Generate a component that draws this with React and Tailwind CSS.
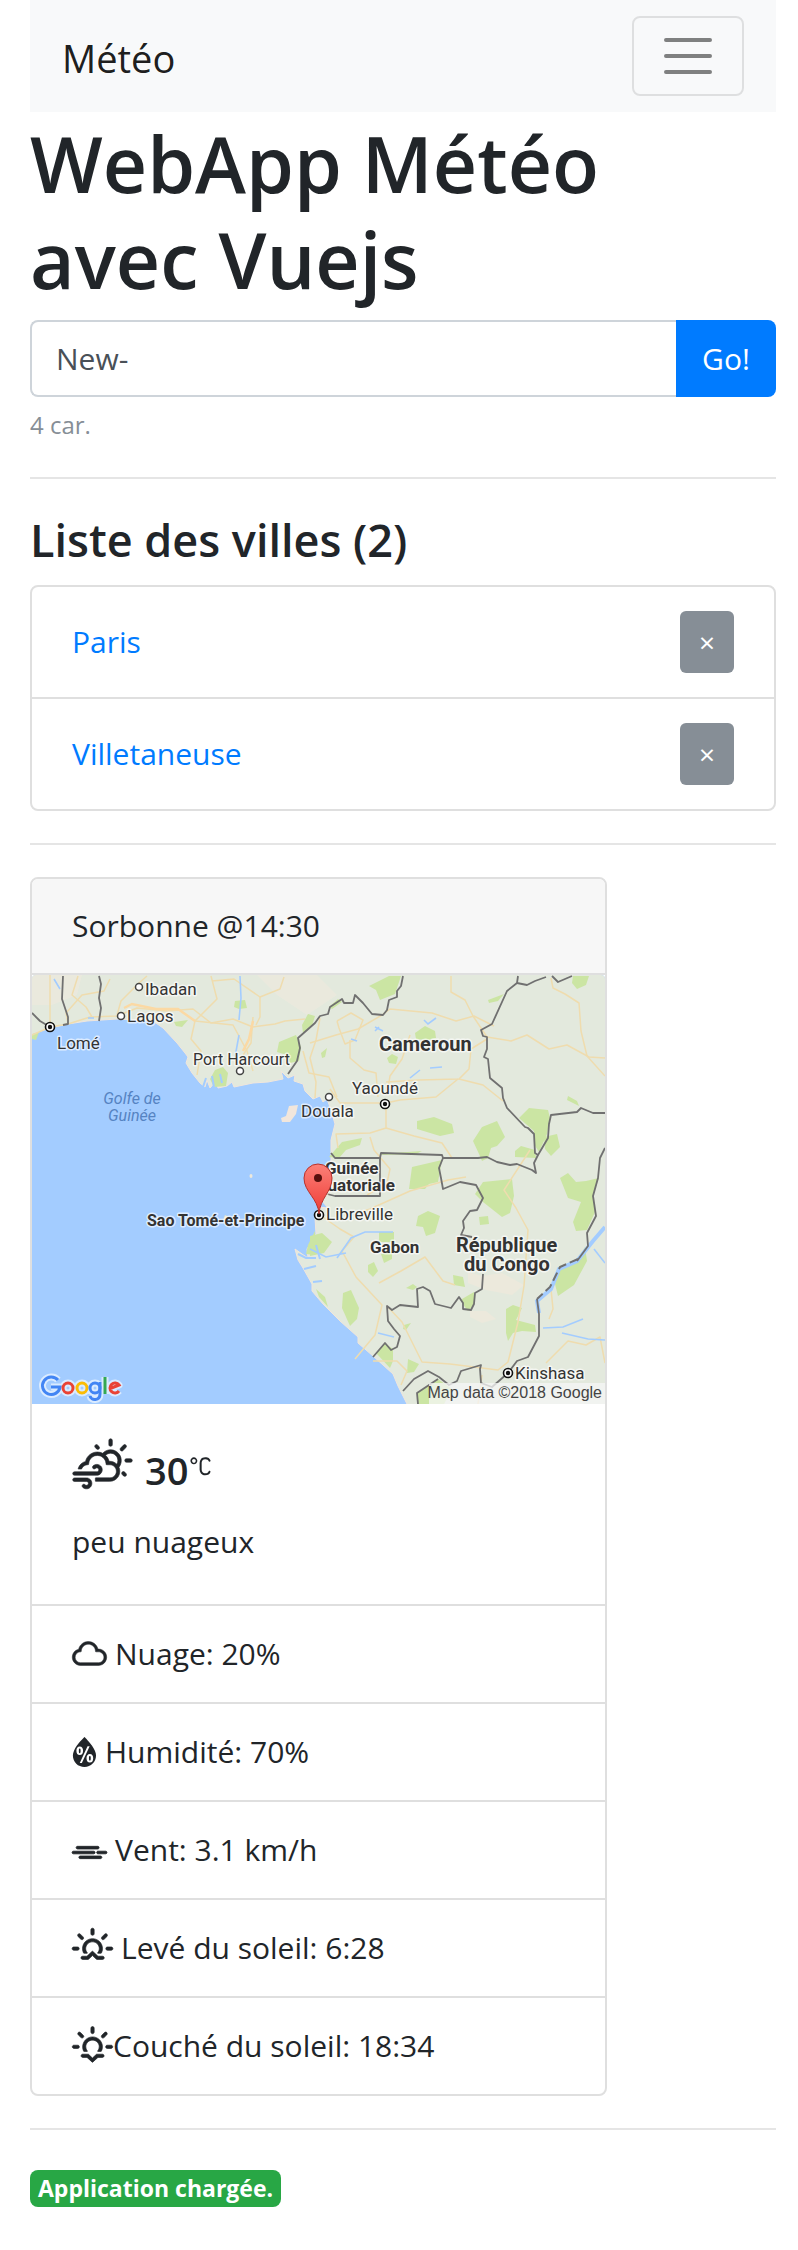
import React, { useState } from "react";
import {
  WiDayCloudyGusts,
  WiCloud,
  WiHumidity,
  WiWindy,
  WiSunrise,
  WiSunset,
  WiCelsius,
} from "react-icons/wi";

const GREENS = [
  "M203 26l10-1 2 8-8 1-5-2z",
  "M142 47l14-2-6 7-6-1z",
  "M0 59l7-2-3 8-4-1z",
  "M183 95l8-3 5 6-2 13-12 1-4-8z",
  "M247 67l17-7 5 12-2 14-9 2-3-8-10-3z",
  "M270 50l6-11 7 2-3 10-9 7z",
  "M337 11l20-10 12 0-6 18-15 6-4-10z",
  "M297 32l9-8 4 3-10 7z",
  "M456 25l16-6-6 7-9 2z",
  "M541 1h16l-3 9-9 4-5-6z",
  "M383 58l10-7 10 5 1 7-8 2-12-1z",
  "M355 83l5-4 6 3-2 7-7-1z",
  "M289 78l6-5-2 9-3 1z",
  "M385 146l17-4 18 7 2 9-14 3-23-7z",
  "M310 167l20-4-2 7-14 5-7 8-10-1z",
  "M347 179l43-3-6 3-33 1z",
  "M441 166l9-14 15-6 4 8 4 8-8 9-6 2-3 10-6 3-3-7z",
  "M487 143l10-10 19 2 2 8-3 16-8 18-5-8v-13z",
  "M536 121l9 5 2 5-12-6z",
  "M512 162l13-3 3 13-9 9-6-7z",
  "M483 176l6-5 14 4 1 8-21-1z",
  "M380 192l30-7-4 22-9 2-4 5-16 0z",
  "M451 207l29-3 2 17-4 17-8 4-19-15-8-8z",
  "M528 203l8-5 8 9 10-1 13-3-6 16 2 18-8 18-11 1-3-9 8-20-13-4z",
  "M386 241l10-5 12 5-5 17-9 3-3-9-7-1z",
  "M347 257h15v10h-15z",
  "M349 279l11-2v7l-8 4z",
  "M278 261l12-3 10 9-8 11-14 3z",
  "M276 270l7-14v24l-9-1z",
  "M336 290l6-3 4 9-5 6-5-5z",
  "M421 300l10 2 2 10-11-2z",
  "M374 313l7-4 4 3-4 3z",
  "M447 242l9-1 1 8-9 1z",
  "M523 309l4-18 19-6 7-13 2 14-13 24-16 11z",
  "M430 324l12-7 1 11-7 8-6-8z",
  "M474 334l7-4 9 3-6 12 19 5 1 7-14-1-9 2-5 8-2-8z",
  "M311 318l8-3 8 18-2 11-7 7-8-18z",
  "M372 350l7-2-5 7-3-1z",
  "M344 378l9-10 8 6v12l-3 7z",
  "M376 384l11 5-5 8-7 1z",
  "M385 418l21-14 14 10-8 15h-27z",
  "M284 314l9 8 3 10-9-10z",
];

const ROADS = [
  "M18 52V0",
  "M0 60l18-8 18-3 22-7 27-1 20-8 30 3 26-2 18 14 22-4 20 8 22-3 10-3 20-2",
  "M36 48l-2-10 16-18 22-4 6-12",
  "M60 42l-6-10-14-12 6-19",
  "M85 40l4-14 18-18 8-7",
  "M163 46l-4 18 10 12-4 24",
  "M163 46l22-22-6-23",
  "M163 46l38 4 14 26 6 20",
  "M180 6l22-2 26 18 20-8 4-12",
  "M228 22v20l-4 8",
  "M221 42l-2 26-8 12",
  "M271 76l6 22 20 4 8 20",
  "M288 43l-4 22-6 18 6 24-1 16",
  "M278 68l26-8 22-6 24-14 8-6 42 4 24 8 18-5 20 10",
  "M305 46l14-8 12 7-8 20-10 4-6-16-2-7",
  "M318 65v18l14 12 12 3 2 24",
  "M419 1v16l14 8 8 16 14 21",
  "M455 62l24 4 16-6 22 14 18-4 22 12 16 1",
  "M519 3l2 10 12 6 14 9 2 28 6 25 18 20",
  "M455 64l-16 10-2 20-10 10-40 1-33 2",
  "M355 120l3-19 12-17 8-24",
  "M427 104l24 6 20 16",
  "M298 114l10 14 46 0 14-3 36-3 22-18",
  "M354 128v25l-16 5-34 1 2 14",
  "M354 153l28 8 28 7 10 15",
  "M338 162l4 13 16 19-3 14-20 12",
  "M326 238l12-4 40-18 38-11 18-3",
  "M288 240l20 14 14 8-12 14 14 26 26 28-7 30-20 24",
  "M355 331l15 16 20 40 28 2 48 6 10-8 10-40 6-36 4-56-12-22-12-18 26-40",
  "M347 308l22-12 24-14 18 24 12 4",
  "M341 386l24 0 10 10-6 14",
  "M514 388l22-22 18 4 14-8 5 26",
  "M507 324l12-10 2 20-4 10",
  "M450 400l-4 29",
];

const WATERS = [
  "M208 1l1 22-2 22M207 60l-4 22",
  "M22 4l6 10M56 43h6",
  "M343 52l8 4M343 56l4-4",
  "M392 45l4 4 8-6",
  "M319 64l6 2",
  "M378 103l10-8M398 93l12-1",
  "M305 283l14-20 14-6 28 0",
  "M278 274l16 8 20-4",
  "M511 353l20-1 20-8",
  "M530 358l26 6 17 1",
  "M346 358l16 4",
  "M562 274l11 14",
];

const BORDERS = [
  "M31 1l-1 23 6 18v7l-5 1",
  "M67 1l2 8-2 14 2 10-2 13",
  "M0 38l8 8 10 6",
  "M256 99l9-13 3-13-2-10 17-15 5-7 8-2 2-7 12-8 2 4h9l2-8 8 8 9 11 11 1 4-5 2-10 8-3v-6l4-5 2-10",
  "M486 1l-1 7-10 8-15 33-11 6 2 6 4 1v12l-3 8 4 2 2 19 12 10 1 10 4 10 18 19 3 1 6 6 1 19 3 2 10-17 1-14 2-9 26-3 4-4 12 5h12",
  "M485 8l10 2 8-4 11-4M520 1l6 6 14-6",
  "M506 180l-4 8 2 10-4-3-15-6-7 1-13-3-10-5-9 1h-35l-1-3-61-2-1 5h-45l-4-5",
  "M348 183v38h-45l-8-2",
  "M411 183l-4 10 2 10 2 11 17-7 16 3 7 13-6 12-7 1-7 10 1 7-3 7 11 2",
  "M451 299l-1 15-7 4-1 11-3 6-8-1v-6l-4-6-8 11-16-4-5-13-7-4-6 2 1 18-18-2-8 5-5-4 1 15 6 8 6 7-3 11-6 3-6-7-12 14",
  "M573 173l-5 10-2 20-5 18 3 20-9 17 1 13-11 15",
  "M505 324l2 15v22l-11 21-11 4-9 12-16 14-11-4-1-14 1-4-20 6-4 10-8 4-10-8-11-6-14 8-11 12",
  "M386 429l-1-11 21-14",
];

const PLACES = [
  { text: "Ibadan", x: 113, y: 20, size: 17 },
  { text: "Lagos", x: 95, y: 47, size: 17 },
  { text: "Lomé", x: 25, y: 74, size: 17 },
  { text: "Port Harcourt", x: 161, y: 90, size: 16 },
  { text: "Douala", x: 269, y: 142, size: 17 },
  { text: "Yaoundé", x: 320, y: 119, size: 17 },
  { text: "Libreville", x: 294, y: 245, size: 17 },
  { text: "Kinshasa", x: 483, y: 404, size: 17 },
  { text: "Cameroun", x: 347, y: 76, size: 20, bold: true },
  { text: "Guinée", x: 293, y: 199, size: 17, bold: true },
  { text: "quatoriale", x: 286, y: 216, size: 17, bold: true },
  { text: "Sao Tomé-et-Principe", x: 115, y: 251, size: 16, bold: true },
  { text: "Gabon", x: 338, y: 278, size: 17, bold: true },
  { text: "République", x: 424, y: 277, size: 20, bold: true },
  { text: "du Congo", x: 432, y: 296, size: 20, bold: true },
];

const TOWNS = [[107, 12], [89, 41], [208, 96], [297, 122]];
const CAPITALS = [[18, 52], [353, 129], [287, 240], [476, 398]];

function CityMap() {
  return (
    <svg viewBox="0 0 573 429" className="block w-full rounded-t-sm" role="img" aria-label="Carte">
      <defs>
        <linearGradient id="pin" x1="0" y1="0" x2="0" y2="1">
          <stop offset="0" stopColor="#fb8078" />
          <stop offset="1" stopColor="#ee3b35" />
        </linearGradient>
      </defs>
      <rect width="573" height="429" fill="#a3ccff" />
      <path
        fill="#e3e9dd"
        stroke="#f1e6dc"
        strokeWidth="1"
        d="M-2 -2V60L18 53 36 49 55 46 85 44 121 46 131 53 145 68 153 78 156 82 154 88 160 98 168 108 173 112 175 105 178 113 184 106 186 113 195 111 200 107 202 112 221 108 236 107 251 104 249 96 256 103 263 100 262 106 271 109 273 116 281 124 288 121 291 127 295 124 299 135 303 149 299 165 299 186 295 205 290 226 296 233 287 232 283 243 284 259 275 274 276 283 270 279 263 274 266 285 271 293 280 309 280 316 291 329 308 346 326 362 326 368 341 381 361 399 366 411 376 431H576V-2Z"
      />
      <path fill="#f1e6dc" d="M257 131l9-1-2 9-6 8-8 0-1-4 5-2z" />
      <path fill="#eeeadd" d="M0 0h50l-5 20-25 10H0zM225 0h60l20 20-30 20-30-20z" opacity=".6" />
      <path fill="#ece9dc" d="M436 297l14 4 20-3 22 12-12 10-26-5-18-7zM438 336l16 0 10 8-14 4-12-6z" />
      <ellipse cx="219" cy="201" rx="1.5" ry="2" fill="#eee9dc" />
      <path d="M193 240l4 2-2 5-4-2z" fill="#eee9c8" />
      <g fill="#cbe5a3">
        {GREENS.map((d) => <path key={d} d={d} />)}
      </g>
      <g fill="none" stroke="#efdcae" strokeWidth="1.5" strokeLinejoin="round">
        {ROADS.map((d) => <path key={d} d={d} />)}
      </g>
      <path d="M92 33l8-4 24 5 22 0 17 12M221 46l-4 18-6 12" fill="none" stroke="#fbd9a4" strokeWidth="2.5" />
      <g fill="none" stroke="#a3ccff" strokeWidth="1.6">
        {WATERS.map((d) => <path key={d} d={d} />)}
      </g>
      <path d="M174 103l-3 9M180 101l2 11M190 108l-2-9M284 270l4 14M266 279l8 4 10 0M272 294l12-3M281 307l9-1" fill="none" stroke="#a3ccff" strokeWidth="2" />
      <path d="M573 252l-12 14-16 20-18 8-8 20-14 12 2 12" fill="none" stroke="#a3ccff" strokeWidth="4" />
      <path d="M546 284l-18 8-10 20-13 12" fill="none" stroke="#707070" strokeWidth="2" strokeDasharray="9 4" />
      <g fill="none" stroke="#707070" strokeWidth="1.8" strokeLinejoin="round">
        {BORDERS.map((d) => <path key={d} d={d} />)}
      </g>
      <rect x="397" y="408" width="176" height="21" fill="#f5f5f5" fillOpacity=".75" />
      {TOWNS.map(([x, y]) => (
        <circle key={x} cx={x} cy={y} r="3.5" fill="#fff" stroke="#444" strokeWidth="1.5" />
      ))}
      {CAPITALS.map(([x, y]) => (
        <g key={x}>
          <circle cx={x} cy={y} r="4.5" fill="#fff" stroke="#111" strokeWidth="1.6" />
          <circle cx={x} cy={y} r="2.2" fill="#111" />
        </g>
      ))}
      <g className="font-['Roboto',sans-serif]" fill="#333" stroke="#fff" strokeOpacity=".65" strokeWidth="3" strokeLinejoin="round" paintOrder="stroke">
        {PLACES.map((p) => (
          <text key={p.text} x={p.x} y={p.y} fontSize={p.size} fontWeight={p.bold ? 700 : 400}>{p.text}</text>
        ))}
      </g>
      <g className="font-['Roboto',sans-serif] italic" fontSize="16" fill="#5583c2" textAnchor="middle">
        <text x="100" y="129">Golfe de</text>
        <text x="100" y="146">Guinée</text>
      </g>
      <text x="570" y="423" fontSize="16" textAnchor="end" fill="#444" className="font-['Liberation_Sans',sans-serif]">Map data ©2018 Google</text>
      <path
        d="M287 239c-1-16-15-22-15-36a14 14 0 0 1 28 0c0 14-12 20-13 36z"
        fill="url(#pin)"
        stroke="#b8322c"
        strokeWidth="1"
      />
      <circle cx="286" cy="203" r="4" fill="#56100d" />
      <GoogleMark />
    </svg>
  );
}

function GoogleMark() {
  return (
    <g fill="none" strokeWidth="3">
      <path
        d="M26 405a8.800 8.800 0 1 0 2 7h-9M31 413a5 5 0 1 0 10 0a5 5 0 1 0-10 0M45 413a5 5 0 1 0 10 0a5 5 0 1 0-10 0M58 413a5 5 0 1 0 10 0a5 5 0 1 0-10 0M68 407v12c0 7-9 7-10 2M73 402v17M77 414l10-4a5 5 0 1 0 0 6"
        stroke="#fff"
        strokeOpacity=".6"
        strokeWidth="7"
        strokeLinejoin="round"
      />
      <path d="M26 405a8.800 8.800 0 1 0 2 7h-9" stroke="#4285f4" />
      <circle cx="36" cy="413" r="5" stroke="#ea4335" />
      <circle cx="50" cy="413" r="5" stroke="#fbbc05" />
      <circle cx="63" cy="413" r="5" stroke="#4285f4" />
      <path d="M68 407v12c0 7-9 7-10 2" stroke="#4285f4" />
      <path d="M73 402v17" stroke="#34a853" />
      <path d="M77 414l10-4a5 5 0 1 0 0 6" stroke="#ea4335" />
    </g>
  );
}

function CityRow({ name }) {
  return (
    <li className="flex items-center justify-between border-b-2 border-[#dfdfdf] px-10 py-6 last:border-b-0">
      <a href="#ville" className="text-[#007bff]">{name}</a>
      <button type="button" aria-label={`Supprimer ${name}`} className="h-[62px] w-[54px] rounded-md bg-[#868e96] text-[28px] leading-none text-white">
        ×
      </button>
    </li>
  );
}

function Detail({ icon, children }) {
  return (
    <li className="flex h-[98px] items-center border-t-2 border-[#dfdfdf] px-10">
      {icon}
      <span>{children}</span>
    </li>
  );
}

const Rule = () => <hr className="my-8 border-t-2 border-[#e5e5e5]" />;

export default function App() {
  const [city, setCity] = useState("New-");
  return (
    <div className="min-h-screen bg-white pr-[22px] pb-8 pl-[30px] font-['Open_Sans','Noto_Sans',sans-serif] text-[30px] leading-[48px] text-[#212529]">
      <nav className="flex h-28 items-center justify-between bg-[#f8f9fa] px-8">
        <a href="#accueil" className="pt-1 text-[38px] text-black/90">Météo</a>
        <button type="button" aria-label="Menu" className="flex h-20 w-28 items-center justify-center rounded-lg border-2 border-black/10">
          <svg viewBox="0 0 60 60" className="size-[60px]" stroke="#7f8080" strokeWidth="4" strokeLinecap="round">
            <path d="M8 14h44M8 30h44M8 46h44" />
          </svg>
        </button>
      </nav>

      <h1 className="mb-3 pt-1 text-[77px] leading-[96px] font-semibold">WebApp Météo<br />avec Vuejs</h1>

      <form onSubmit={(e) => e.preventDefault()}>
        <div className="flex h-[77px]">
          <input
            id="ville"
            aria-label="Ville"
            value={city}
            onChange={(e) => setCity(e.target.value)}
            className="min-w-0 flex-1 rounded-l-lg border-2 border-r-0 border-[#ced4da] px-6 text-[#495057] outline-none"
          />
          <button type="submit" className="w-[100px] rounded-r-lg bg-[#007bff] text-white">Go!</button>
        </div>
        <label htmlFor="ville" className="mt-2 block text-2xl leading-[40px] text-[#868e96]">{city.length} car.</label>
      </form>

      <Rule />

      <h2 className="mb-4 text-[45px] leading-[58px] font-semibold">Liste des villes (2)</h2>
      <ul className="rounded-lg border-2 border-[#dfdfdf]">
        <CityRow name="Paris" />
        <CityRow name="Villetaneuse" />
      </ul>

      <Rule />

      <section className="w-[577px] max-w-full overflow-hidden rounded-lg border-2 border-[#dfdfdf]">
        <header className="border-b-2 border-[#dfdfdf] bg-[#f7f7f7] px-10 py-6 leading-[46px]">Sorbonne @14:30</header>
        <CityMap />
        <div className="px-10 pt-10 pb-9">
          <h3 className="mb-5 flex items-center text-[38px] leading-[50px] font-semibold">
            <WiDayCloudyGusts viewBox="0 3.500 30 25.500" strokeWidth=".300" className="mr-3 h-[52px] w-[61px] overflow-visible" />
            30
            <WiCelsius viewBox="8.500 9.500 13 13" className="size-[25px] overflow-visible" />
          </h3>
          <p className="leading-[52px]">peu nuageux</p>
        </div>
        <ul>
          <Detail icon={<WiCloud viewBox="4.600 7.700 20.800 14.500" strokeWidth=".300" className="mr-2 h-6 w-[35px] overflow-visible" />}>Nuage: 20%</Detail>
          <Detail icon={<WiHumidity viewBox="7 5 16 20" className="mr-2 h-8 w-[25px] overflow-visible" />}>Humidité: 70%</Detail>
          <Detail icon={<WiWindy viewBox="4.600 10 20.800 8" strokeWidth=".500" className="mr-2 h-[14px] w-[35px] overflow-visible" />}>Vent: 3.1 km/h</Detail>
          <Detail icon={<WiSunrise viewBox="2.700 5.500 24.600 19" strokeWidth=".400" className="mr-2 h-8 w-[41px] overflow-visible" />}>Levé du soleil: 6:28</Detail>
          <Detail icon={<WiSunset viewBox="2.700 5.500 24.600 19" strokeWidth=".400" className="h-8 w-[41px] overflow-visible" />}>Couché du soleil: 18:34</Detail>
        </ul>
      </section>

      <Rule />

      <span className="mt-2 inline-block rounded-lg bg-[#28a745] px-2 text-[23px] leading-[37px] font-bold text-white">Application chargée.</span>
    </div>
  );
}
